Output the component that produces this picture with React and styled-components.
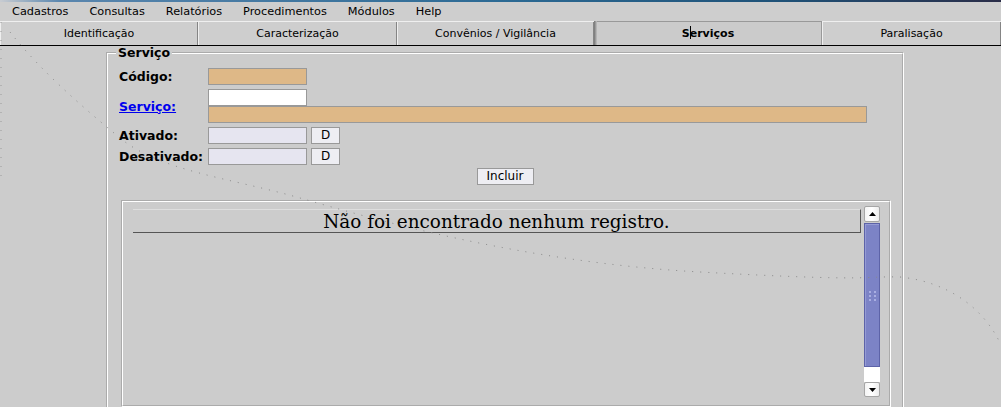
import React from 'react'
import styled, { createGlobalStyle } from 'styled-components'

const GlobalStyle = createGlobalStyle`
  html, body {
    margin: 0;
    padding: 0;
    background: #cccccc;
    overflow: hidden;
  }
  body {
    font-family: "DejaVu Sans", "Liberation Sans", sans-serif;
    color: #000;
  }
`

const Screen = styled.div`
  position: relative;
  width: 1001px;
  height: 407px;
  background: #cccccc;
  overflow: hidden;
`

const TitleStrip = styled.div`
  height: 2px;
  background: linear-gradient(90deg, #c8ccd2 0%, #5a86ae 6%, #2c6a94 50%, #1f5278 78%, #2a2d48 100%);
`

const MenuBar = styled.nav`
  height: 19px;
  display: flex;
  align-items: center;
  gap: 21px;
  padding-left: 12px;
  font-size: 11.3px;
  background: #cecece;
`

const MenuItem = styled.span`
  cursor: default;
`

const TabBar = styled.div`
  display: flex;
  height: 24px;
  border-bottom: 1px solid #000;
`

const Tab = styled.div`
  flex: 0 0 ${p => p.$w}px;
  display: flex;
  align-items: center;
  justify-content: center;
  font-size: 11px;
  font-weight: ${p => (p.$active ? 'bold' : 'normal')};
  background: ${p => (p.$active ? '#cbcbcb' : '#cecece')};
  box-shadow: ${p =>
    p.$active
      ? 'inset 1px 0 0 #808080, inset 2px 0 0 #9a9a9a, inset 3px 0 0 #b4b4b4, inset 0 1px 0 #999, inset -1px 0 0 #999'
      : 'inset 1px 1px 0 #efefef, inset -1px 0 0 #858585'};
`

const Caret = styled.span`
  display: inline-block;
  width: 1px;
  height: 13px;
  margin-right: -1px;
  background: #000;
  vertical-align: -2px;
`

const Content = styled.main`
  padding-left: 106px;
`

const Panel = styled.fieldset`
  width: 797px;
  box-sizing: border-box;
  margin: 0;
  padding: 0 11px;
  border: 2px groove #ffffff;
`

const Legend = styled.legend`
  margin-left: -3px;
  padding: 0 2px;
  font-size: 12.5px;
  font-weight: bold;
  line-height: 14px;
`

const Form = styled.div`
  display: flex;
  flex-direction: column;
  gap: 4px;
  padding-top: 8px;
`

const FieldRow = styled.div`
  display: flex;
  align-items: center;
`

const Label = styled.span`
  flex: 0 0 89px;
  font-size: 12.5px;
  font-weight: bold;
`

const LinkLabel = styled.a`
  flex: 0 0 89px;
  font-size: 12.5px;
  font-weight: bold;
  color: #0000ee;
  text-decoration: underline;
  cursor: pointer;
`

const Stack = styled.div`
  display: flex;
  flex-direction: column;
`

const Input = styled.div`
  box-sizing: border-box;
  width: ${p => p.$w || 99}px;
  height: 17px;
  border: 1px solid #999;
  background: ${p => p.$bg};
`

const SmallButton = styled.button`
  box-sizing: border-box;
  width: ${p => p.$w}px;
  height: 17px;
  margin: 0 0 0 ${p => p.$ml || 0}px;
  padding: 0;
  border: 1px solid #999;
  background: #eeeef3;
  font-family: "DejaVu Sans", sans-serif;
  font-size: 12px;
  line-height: 15px;
  color: #000;
`

const ButtonRow = styled.div`
  display: flex;
  justify-content: center;
  margin-top: -1px;
`

const ListBox = styled.div`
  display: flex;
  align-items: flex-start;
  box-sizing: border-box;
  width: 770px;
  height: 207px;
  margin: 15px 0 0 2px;
  border: 2px groove #ffffff;
`

const ListBody = styled.div`
  flex: 1;
  padding: 7px 0 0 10px;
`

const EmptyHeader = styled.div`
  box-sizing: border-box;
  height: 24px;
  display: flex;
  align-items: center;
  justify-content: center;
  border-top: 1px solid #dedede;
  border-right: 1px solid #555;
  border-bottom: 1px solid #555;
  font-family: "DejaVu Serif", "Liberation Serif", serif;
  font-size: 18.4px;
`

const ScrollBar = styled.div`
  flex: 0 0 16px;
  display: flex;
  flex-direction: column;
  margin: 4px 9px 0 3px;
`

const ScrollButton = styled.div`
  box-sizing: border-box;
  height: ${p => p.$h}px;
  display: flex;
  align-items: center;
  justify-content: center;
  border: 1px solid #a6a6a6;
  border-radius: 2px;
  background: linear-gradient(90deg, #f4f4f4, #ffffff 50%, #ececec);
`

const Thumb = styled.div`
  box-sizing: border-box;
  height: 144px;
  margin-top: 1px;
  display: flex;
  align-items: center;
  justify-content: center;
  border: 1px solid #5d63a8;
  background: #7c83c6;
  box-shadow: inset 1px 1px 0 #959bd4;
`

const Grip = styled.div`
  display: grid;
  grid-template-columns: 2px 2px;
  gap: 2px 3px;
  margin-top: 2px;

  span {
    width: 2px;
    height: 2px;
    background: #a9aee2;
  }
`

const Track = styled.div`
  height: 15px;
  background: #fff;
`

const Overlay = styled.svg`
  position: absolute;
  inset: 0;
  pointer-events: none;
`

const Arrow = ({ up }) => (
  <svg width="7" height="4" viewBox="0 0 7 4">
    <path d={up ? 'M0 4 L3.5 0 L7 4 Z' : 'M0 0 L3.5 4 L7 0 Z'} fill="#000" />
  </svg>
)

const menus = ['Cadastros', 'Consultas', 'Relatórios', 'Procedimentos', 'Módulos', 'Help']

const tabs = [
  { label: 'Identificação', w: 198 },
  { label: 'Caracterização', w: 199 },
  { label: 'Convênios / Vigilância', w: 197 },
  { label: 'Serviços', w: 228, active: true },
  { label: 'Paralisação', w: 179 },
]

export default function App() {
  return (
    <Screen>
      <GlobalStyle />
      <TitleStrip />
      <MenuBar>
        {menus.map(m => (
          <MenuItem key={m}>{m}</MenuItem>
        ))}
      </MenuBar>
      <TabBar>
        {tabs.map(t => (
          <Tab key={t.label} $w={t.w} $active={t.active}>
            {t.active ? (
              <span>
                S<Caret />erviços
              </span>
            ) : (
              t.label
            )}
          </Tab>
        ))}
      </TabBar>

      <Content>
        <Panel>
          <Legend>Serviço</Legend>
          <Form>
            <FieldRow>
              <Label>Código:</Label>
              <Input $bg="#deb887" />
            </FieldRow>
            <FieldRow>
              <LinkLabel>Serviço:</LinkLabel>
              <Stack>
                <Input $bg="#ffffff" />
                <Input $bg="#deb887" $w={659} />
              </Stack>
            </FieldRow>
            <FieldRow>
              <Label>Ativado:</Label>
              <Input $bg="#e6e5f0" />
              <SmallButton $w={29} $ml={4}>D</SmallButton>
            </FieldRow>
            <FieldRow>
              <Label>Desativado:</Label>
              <Input $bg="#e6e5f0" />
              <SmallButton $w={29} $ml={4}>D</SmallButton>
            </FieldRow>
            <ButtonRow>
              <SmallButton $w={57}>Incluir</SmallButton>
            </ButtonRow>
          </Form>

          <ListBox>
            <ListBody>
              <EmptyHeader>Não foi encontrado nenhum registro.</EmptyHeader>
            </ListBody>
            <ScrollBar>
              <ScrollButton $h={16}>
                <Arrow up />
              </ScrollButton>
              <Thumb>
                <Grip>
                  {Array.from({ length: 6 }).map((_, i) => (
                    <span key={i} />
                  ))}
                </Grip>
              </Thumb>
              <Track />
              <ScrollButton $h={15}>
                <Arrow />
              </ScrollButton>
            </ScrollBar>
          </ListBox>
        </Panel>
      </Content>

      {/* faint dotted trail drawn over the screen */}
      <Overlay width="1001" height="407" viewBox="0 0 1001 407">
        <path
          d="M10 32 C 40 70, 80 105, 120 138 S 230 178, 300 198 S 520 262, 700 272 S 860 276, 900 277 C 950 282, 985 310, 1001 345"
          fill="none"
          stroke="#8a8a8a"
          strokeWidth="1"
          strokeDasharray="1 7"
        />
        <path d="M1 22 L1 180" fill="none" stroke="#9a9a9a" strokeWidth="1" strokeDasharray="1 8" />
      </Overlay>
    </Screen>
  )
}
